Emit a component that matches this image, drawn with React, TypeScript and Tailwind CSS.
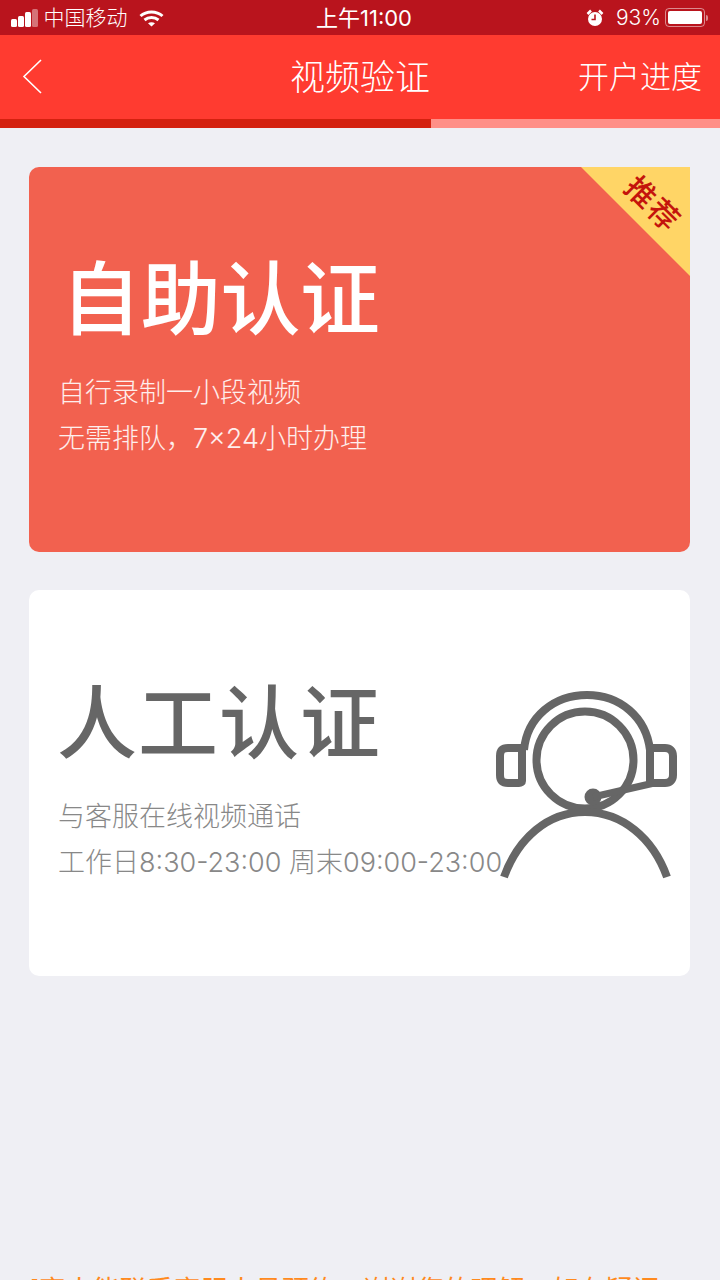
const FONT = { fontFamily: 'Inter, "Noto Sans CJK SC", sans-serif' };

function StatusBar() {
  return (
    <div className="h-[35px] bg-[#b9141d] flex items-center justify-between pl-[11px] pr-[12px] text-white relative">
      <div className="flex items-center">
        <div className="flex items-end gap-[1.5px] h-[18px]">
          <div className="w-[5.5px] h-[8px] bg-white rounded-[1.5px]" />
          <div className="w-[5.5px] h-[11px] bg-white rounded-[1.5px]" />
          <div className="w-[5.5px] h-[15px] bg-white rounded-[1.5px]" />
          <div className="w-[5.5px] h-[18px] bg-white/40 rounded-[1.5px]" />
        </div>
        <span className="ml-[6px] text-[21px] leading-none font-light">中国移动</span>
        <svg className="ml-[11px]" width="25" height="18" viewBox="0 0 25 18" fill="none" stroke="#fff" strokeWidth="3">
          <path d="M1.5 7C7.5 1.5 17.5 1.5 23.5 7" />
          <path d="M5.5 11C9.5 7.8 15.5 7.8 19.5 11" />
          <path d="M12.5 17.5L9 14.2C11 12.8 14 12.8 16 14.2Z" fill="#fff" stroke="none" />
        </svg>
      </div>
      <span className="absolute left-[316px] top-[5px] text-[22px] leading-[26px] font-normal">上午11:00</span>
      <div className="flex items-center">
        <svg width="18" height="18" viewBox="0 0 18 18">
          <circle cx="9" cy="10" r="7" fill="#fff" />
          <path d="M1.5 5L5 1.5M16.5 5L13 1.5" stroke="#fff" strokeWidth="2.5" />
          <path d="M9 5.5V10.5H5.5" stroke="#b9141d" strokeWidth="1.6" fill="none" />
        </svg>
        <span className="ml-[12px] text-[21px] leading-none font-light">93%</span>
        <div className="ml-[4px] w-[40px] h-[19px] rounded-[4px] border border-white/50 p-[2px]">
          <div className="h-full w-[34px] bg-white rounded-[2px]" />
        </div>
        <div className="ml-[1px] w-[2px] h-[6px] bg-white/50 rounded-r-sm" />
      </div>
    </div>
  );
}

function NavBar() {
  return (
    <div className="bg-[#ff3b30] text-white">
      <div className="h-[84px] relative flex items-center justify-center">
        <svg className="absolute left-[22px] top-[24px]" width="20" height="35" viewBox="0 0 20 35" fill="none" stroke="#fff" strokeWidth="1.6">
          <path d="M19 1L2 17.5L19 34" />
        </svg>
        <span className="text-[35px] leading-none font-light">视频验证</span>
        <span className="absolute right-[18px] top-[22px] text-[31px] leading-[40px] font-light">开户进度</span>
      </div>
      <div className="h-[9px] flex">
        <div className="w-[431px] bg-[#d4210f]" />
        <div className="flex-1 bg-[#ff8f87]" />
      </div>
    </div>
  );
}

function AgentIcon() {
  return (
    <svg
      width="195"
      height="200"
      viewBox="490 685 195 200"
      fill="none"
      stroke="#666"
      strokeWidth="8"
      className="absolute left-[461px] top-[95px]"
    >
      <circle cx="585" cy="760" r="48.5" />
      <path d="M524 750C527 717 554 695 587 695C620 695 646 717 650 750V783" />
      <path d="M522 748H508C502 748 500 751 500 756V775C500 780 502 783 508 783H519C521 783 522 782 522 781Z" />
      <path d="M650 748H665C670 748 673 751 673 756V775C673 780 670 783 665 783H650" />
      <circle cx="593" cy="797" r="8.500" fill="#666" stroke="none" />
      <path d="M593 797L652 783.500" strokeWidth="7" />
      <path d="M504 877C518 838 548 812 585 812C622 812 653 838 667 877" />
    </svg>
  );
}

export default function App() {
  return (
    <div className="w-[720px] h-[1280px] bg-[#efeff4] relative overflow-hidden" style={FONT}>
      <StatusBar />
      <NavBar />

      <div className="pl-[29px] pr-[30px] pt-[39px] flex flex-col gap-[38px]">
        <div className="h-[385px] rounded-[10px] rounded-tr-none bg-[#f2614f] relative overflow-hidden text-white pl-[29px] pt-[84px]">
          <div className="text-[80px] leading-[96px] font-medium pl-[3px] tracking-[-0.3px]">自助认证</div>
          <div className="mt-[23px] text-[27px] leading-[46px] font-light text-white/90">
            <div>自行录制一小段视频</div>
            <div>无需排队，7×24小时办理</div>
          </div>
          <div className="absolute right-0 top-0 w-0 h-0 border-l-[109px] border-l-transparent border-t-[109px] border-t-[#ffd566]" />
          <div className="absolute right-[5px] top-[22px] text-[30px] leading-none rotate-45 text-[#c4140c] font-medium tracking-[2px]">推荐</div>
        </div>

        <div className="h-[386px] rounded-[10px] bg-white relative text-[#666] pl-[29px] pt-[85px]">
          <div className="text-[80px] leading-[96px] font-medium -ml-[1px] tracking-[1px]">人工认证</div>
          <div className="mt-[23px] text-[27px] leading-[46px] font-light text-[#888] whitespace-nowrap">
            <div>与客服在线视频通话</div>
            <div>工作日8:30-23:00 周末09:00-23:00</div>
          </div>
          <AgentIcon />
        </div>
      </div>

      <div className="absolute left-[29px] top-[1273px] text-[27px] leading-[36px] text-[#ff8a1e] whitespace-nowrap">
        [客人能联系客服人员预约，谢谢您的理解，如有疑问
      </div>
    </div>
  );
}
